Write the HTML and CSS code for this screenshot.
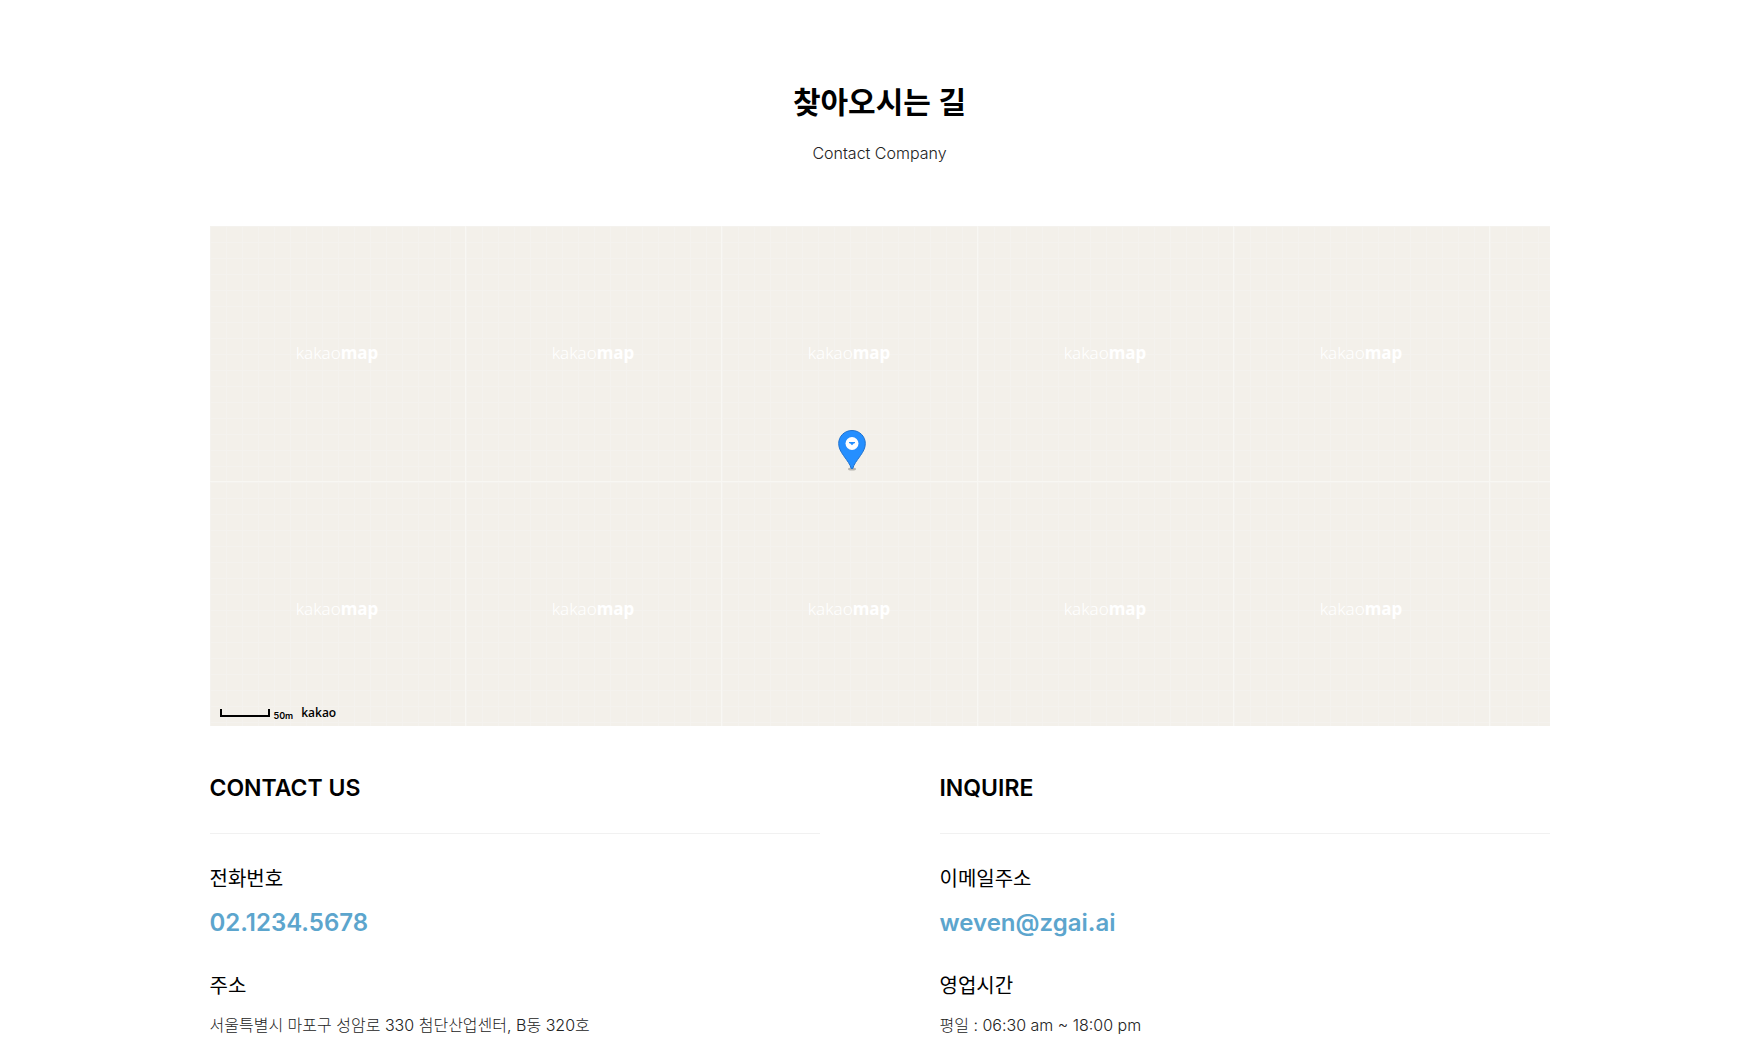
FILE: index.html
```html
<!DOCTYPE html>
<html lang="ko">

<head>
    <meta charset="utf-8">
    <meta name="viewport" content="width=device-width, initial-scale=1">
    <title>찾아오시는 길</title>
    <link rel="stylesheet" href="styles.css">
</head>

<body>
    <main class="contact">
        <header class="contact-header">
            <h1>찾아오시는 길</h1>
            <p>Contact Company</p>
        </header>

        <div class="map">
            <div class="map-tiles">
                <div class="tile">kakao<b>map</b></div>
                <div class="tile">kakao<b>map</b></div>
                <div class="tile">kakao<b>map</b></div>
                <div class="tile">kakao<b>map</b></div>
                <div class="tile">kakao<b>map</b></div>
                <div class="tile"></div>
                <div class="tile">kakao<b>map</b></div>
                <div class="tile">kakao<b>map</b></div>
                <div class="tile">kakao<b>map</b></div>
                <div class="tile">kakao<b>map</b></div>
                <div class="tile">kakao<b>map</b></div>
                <div class="tile"></div>
            </div>

            <!-- Marker -->
            <svg class="map-marker" width="30" height="44" viewBox="0 0 30 44" aria-hidden="true">
                <ellipse cx="15" cy="40" rx="4" ry="1.500" fill="#000" opacity=".25"/>
                <path d="M15 1.500C7.500 1.500 1.700 7.300 1.700 14.500c0 4.600 2 8 4.800 12C10.500 32.200 13 35 14.200 39.500h1.600C17 35 19.500 32.200 23.500 26.500c2.800-4 4.800-7.400 4.800-12C28.300 7.300 22.500 1.500 15 1.500z" fill="#258fff" stroke="#1f72cf"/>
                <circle cx="15" cy="14.500" r="6.500" fill="#fff"/>
                <path d="M12 13h6v1.200h-1L15 16.200l-2-2h-1z" fill="#258fff"/>
            </svg>

            <!-- Scale bar and logo -->
            <div class="map-copyright">
                <span class="scale-bar"></span>
                <span class="scale-text">50m</span>
                <a class="kakao-logo" href="#">kakao</a>
            </div>
        </div>

        <div class="info">
            <section class="info-box">
                <h2>CONTACT US</h2>
                <dl>
                    <dt>전화번호</dt>
                    <dd><a href="tel:0212345678">02.1234.5678</a></dd>
                    <dt>주소</dt>
                    <dd>서울특별시 마포구 성암로 330 첨단산업센터, B동 320호</dd>
                </dl>
            </section>
            <section class="info-box">
                <h2>INQUIRE</h2>
                <dl>
                    <dt>이메일주소</dt>
                    <dd><a href="mailto:weven@zgai.ai">weven@zgai.ai</a></dd>
                    <dt>영업시간</dt>
                    <dd>평일 : 06:30 am ~ 18:00 pm</dd>
                </dl>
            </section>
        </div>
    </main>
</body>

</html>
```
FILE: styles.css
```css
* {
    box-sizing: border-box;
    margin: 0;
    padding: 0;
}

body {
    background-color: #fff;
    color: #000;
    font-family: Inter, "Noto Sans CJK KR", sans-serif;
    overflow-x: hidden;
}

a {
    color: inherit;
    text-decoration: none;
}

.contact {
    max-width: 1380px;
    margin: 0 auto;
    padding: 80px 20px 0;
}

.contact-header {
    text-align: center;
    margin-bottom: 60px;
}

.contact-header h1 {
    font-size: 30px;
    font-weight: 600;
    line-height: 44px;
    margin-bottom: 16px;
}

.contact-header p {
    color: #222;
    font-size: 16px;
    font-weight: 300;
    line-height: 26px;
}

/* Map */
.map {
    position: relative;
    height: 500px;
    overflow: hidden;
    background-color: #f3f0ea;
}

.map-tiles {
    display: grid;
    grid-template-columns: repeat(6, 256px);
    grid-auto-rows: 256px;
}

.tile {
    display: flex;
    align-items: center;
    justify-content: center;
    padding-bottom: 2px;
    border-right: 1px solid #f8f7f3;
    border-bottom: 1px solid #f8f7f3;
    background-image:
        linear-gradient(to right, #f4f2ee 1px, transparent 1px),
        linear-gradient(to bottom, #f4f2ee 1px, transparent 1px);
    background-size: 16px 16px;
    color: #fff;
    font-family: "Noto Sans", sans-serif;
    font-size: 17px;
    font-weight: 300;
}

.tile b {
    font-weight: 700;
}

.map-marker {
    position: absolute;
    top: 203px;
    left: 627px;
}

.map-copyright {
    position: absolute;
    left: 10px;
    bottom: 4px;
    display: flex;
    align-items: flex-end;
    color: #000;
}

.scale-bar {
    width: 50px;
    height: 8px;
    margin-bottom: 5px;
    border: 2px solid #000;
    border-top: 0;
}

.scale-text {
    margin-left: 4px;
    font-size: 9px;
    font-weight: 600;
    line-height: 12px;
}

.kakao-logo {
    margin-left: 8px;
    font-family: "Open Sans", sans-serif;
    font-size: 12px;
    font-weight: 600;
    line-height: 18px;
}

/* Contact info */
.info {
    display: grid;
    grid-template-columns: 1fr 1fr;
    column-gap: 120px;
    padding: 44px 0;
}

.info-box h2 {
    padding-bottom: 27px;
    border-bottom: 1px solid #f1f1f1;
    font-size: 23px;
    font-weight: 600;
    line-height: 36px;
}

.info-box dt {
    margin-top: 30px;
    font-size: 20px;
    line-height: 30px;
}

.info-box dd {
    margin-top: 11px;
    color: #222;
    font-size: 16px;
    font-weight: 300;
    line-height: 26px;
}

.info-box dd a {
    display: block;
    color: #5ca5cd;
    font-size: 24px;
    font-weight: 600;
    line-height: 36px;
}
```
